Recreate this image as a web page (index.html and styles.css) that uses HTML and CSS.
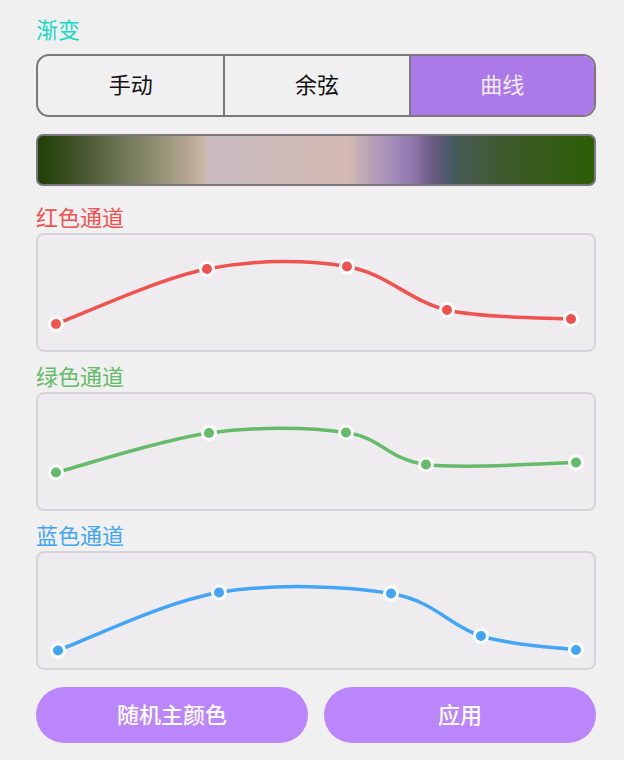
FILE: index.html
```html
<!DOCTYPE html>
<html lang="zh-CN">
<head>
<meta charset="utf-8">
<title>渐变</title>
<link rel="stylesheet" href="styles.css">
</head>
<body>
<div class="panel">
  <div class="title">渐变</div>
  <div class="segmented">
    <div class="seg">手动</div>
    <div class="seg">余弦</div>
    <div class="seg active">曲线</div>
  </div>
  <div class="gradient"></div>

  <div class="channel-label red first">红色通道</div>
  <div class="chart">
    <svg viewBox="38 235 556 115" preserveAspectRatio="none">
      <path class="curve red" d="M56,324 C81.2,314.8 158.5,278.6 207,269 C255.5,259.4 307,259.7 347,266.5 C387,273.3 409.7,301.3 447,310 C484.3,318.75 550.3,317.5 571,319"/>
      <g class="dots red">
        <circle cx="56" cy="324" r="6.5"/>
        <circle cx="207" cy="269" r="6.5"/>
        <circle cx="347" cy="266.5" r="6.5"/>
        <circle cx="447" cy="310" r="6.5"/>
        <circle cx="571" cy="319" r="6.5"/>
      </g>
    </svg>
  </div>

  <div class="channel-label green">绿色通道</div>
  <div class="chart">
    <svg viewBox="38 394 556 115" preserveAspectRatio="none">
      <path class="curve green" d="M56,472.5 C81.5,465.9 160.7,439.7 209,433 C257.3,426.3 309.8,427.25 346,432.5 C382.2,437.75 387.7,459.5 426,464.5 C464.3,469.5 551,462.8 576,462.5"/>
      <g class="dots green">
        <circle cx="56" cy="472.5" r="6.5"/>
        <circle cx="209" cy="433" r="6.5"/>
        <circle cx="346" cy="432.5" r="6.5"/>
        <circle cx="426" cy="464.5" r="6.5"/>
        <circle cx="576" cy="462.5" r="6.5"/>
      </g>
    </svg>
  </div>

  <div class="channel-label blue">蓝色通道</div>
  <div class="chart">
    <svg viewBox="38 553 556 115" preserveAspectRatio="none">
      <path class="curve blue" d="M58,650.5 C84.8,640.8 163.5,602 219,592.5 C274.5,583 347.3,586.25 391,593.5 C434.7,600.75 450.2,626.6 481,636 C511.8,645.4 560.2,647.7 576,650"/>
      <g class="dots blue">
        <circle cx="58" cy="650.5" r="6.5"/>
        <circle cx="219" cy="592.5" r="6.5"/>
        <circle cx="391" cy="593.5" r="6.5"/>
        <circle cx="481" cy="636" r="6.5"/>
        <circle cx="576" cy="650" r="6.5"/>
      </g>
    </svg>
  </div>

  <div class="actions">
    <button class="btn" type="button">随机主颜色</button>
    <button class="btn" type="button">应用</button>
  </div>
</div>
</body>
</html>
```

FILE: styles.css
```css
* {
  box-sizing: border-box;
}

html, body {
  margin: 0;
  background: #f0f0f0;
}

body {
  font-family: "Noto Sans CJK SC", "Noto Sans", sans-serif;
}

.panel {
  width: 560px;
  margin-left: 36px;
  padding-top: 15px;
}

.title {
  font-size: 22px;
  line-height: 26px;
  height: 30px;
  color: #1ad6c6;
  margin-bottom: 9px;
}

.segmented {
  display: grid;
  grid-template-columns: 1fr 1fr 1fr;
  height: 63px;
  border: 2px solid #7c777c;
  border-radius: 13px;
  overflow: hidden;
}

.seg {
  display: flex;
  align-items: center;
  justify-content: center;
  font-size: 22px;
  color: #111;
  padding-bottom: 5px;
}

.seg + .seg {
  border-left: 2px solid #7c777c;
}

.seg.active {
  background: #ab7ae8;
  color: #f3eafb;
}

.gradient {
  margin-top: 17px;
  height: 52px;
  border: 2px solid #7c777c;
  border-radius: 7px;
  background: linear-gradient(to right,
    #1f4006 0%,
    #4a5832 8.6%,
    #6a7452 14.6%,
    #8d8c70 20.7%,
    #b3a68f 26.6%,
    #c9b5a4 29.7%,
    #cbbbbf 30.8%,
    #ccbcbe 36.3%,
    #d0bbb9 44.8%,
    #d5bab2 55.6%,
    #b8a2b5 59.7%,
    #9c84b9 65.1%,
    #8a73a5 68%,
    #6b5a85 70.7%,
    #465b60 74.6%,
    #455b45 78.2%,
    #3d5a2b 84.2%,
    #2b5e05 100%);
}

.channel-label {
  font-size: 22px;
  line-height: 26px;
  height: 30px;
  margin-top: 10px;
}

.channel-label.first {
  margin-top: 17px;
}

.channel-label.red { color: #ef5350; }
.channel-label.green { color: #66bb6a; }
.channel-label.blue { color: #42a5f5; }

.chart {
  height: 119px;
  border: 2px solid #d6d4d8;
  border-radius: 8px;
  background: #eeecef;
  overflow: hidden;
}

.chart svg {
  display: block;
  width: 100%;
  height: 100%;
}

.curve {
  fill: none;
  stroke-width: 3.5;
  stroke-linecap: round;
}

.curve.red { stroke: #ef5350; }
.curve.green { stroke: #66bb6a; }
.curve.blue { stroke: #42a5f5; }

.dots circle {
  stroke: #ffffff;
  stroke-width: 3;
}

.dots.red circle { fill: #ef5350; }
.dots.green circle { fill: #66bb6a; }
.dots.blue circle { fill: #42a5f5; }

.actions {
  display: grid;
  grid-template-columns: 1fr 1fr;
  gap: 16px;
  margin-top: 17px;
}

.btn {
  display: flex;
  align-items: center;
  justify-content: center;
  height: 56px;
  border: none;
  border-radius: 28px;
  background: #bb86fc;
  color: #ffffff;
  font-family: inherit;
  font-size: 22px;
  font-weight: 500;
  padding: 0 0 5px;
  margin: 0;
}
```
